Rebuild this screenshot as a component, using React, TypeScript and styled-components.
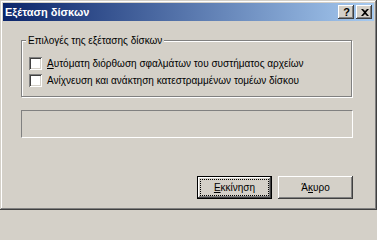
import React from "react";
import styled, { createGlobalStyle } from "styled-components";

const FACE = "#d4d0c8";

const GlobalStyle = createGlobalStyle`
  html, body {
    margin: 0;
    padding: 0;
    background: ${FACE};
  }
  body {
    font-family: "Liberation Sans", Arial, sans-serif;
    font-size: 10px;
    color: #000;
  }
`;

const raised = `
  box-shadow: inset -1px -1px #404040, inset 1px 1px #ffffff,
    inset -2px -2px #808080, inset 2px 2px ${FACE};
`;

const Window = styled.div`
  box-sizing: border-box;
  width: 377px;
  height: 210px;
  padding: 3px;
  display: flex;
  flex-direction: column;
  background: ${FACE};
  box-shadow: inset -1px -1px #404040, inset 1px 1px ${FACE},
    inset -2px -2px #808080, inset 2px 2px #ffffff;
`;

const TitleBar = styled.div`
  height: 18px;
  display: flex;
  align-items: center;
  padding: 0 2px;
  background: linear-gradient(to right, #0a246a, #a6caf0);
`;

const Caption = styled.span`
  flex: 1;
  color: #fff;
  font-weight: bold;
  font-size: 11px;
  line-height: 18px;
`;

const CaptionButtons = styled.div`
  display: flex;
  gap: 2px;
`;

const CaptionButton = styled.div`
  box-sizing: border-box;
  width: 16px;
  height: 14px;
  display: flex;
  align-items: center;
  justify-content: center;
  background: ${FACE};
  font-weight: bold;
  font-size: 11px;
  line-height: 14px;
  padding-left: 1px;
  ${raised}
`;

const Client = styled.div`
  flex: 1;
  display: flex;
  flex-direction: column;
  padding: 0 0 0 18px;
`;

const GroupBox = styled.fieldset`
  box-sizing: border-box;
  width: 331px;
  margin: 13px 0 0;
  padding: 10px 0 9px 0;
  border: 1px solid #808080;
  box-shadow: 1px 1px 0 #ffffff, inset 1px 1px 0 #ffffff;
  display: flex;
  flex-direction: column;
  gap: 4px;
`;

const GroupTitle = styled.legend`
  margin-left: 4px;
  padding: 0 2px;
  line-height: 13px;
  background: ${FACE};
`;

const CheckRow = styled.label`
  display: flex;
  align-items: center;
  gap: 5px;
  height: 13px;
  line-height: 13px;
  margin-left: 7px;
`;

const CheckBox = styled.span`
  box-sizing: border-box;
  width: 13px;
  height: 13px;
  flex: none;
  background: #fff;
  box-shadow: inset 1px 1px #808080, inset -1px -1px #ffffff,
    inset 2px 2px #404040, inset -2px -2px ${FACE};
`;

const Progress = styled.div`
  box-sizing: border-box;
  width: 332px;
  height: 28px;
  margin-top: 13px;
  border: 1px solid;
  border-color: #808080 #ffffff #ffffff #808080;
`;

const ButtonRow = styled.div`
  width: 332px;
  display: flex;
  justify-content: flex-end;
  gap: 6px;
  margin-top: 38px;
`;

const PushButton = styled.div<{ $default?: boolean }>`
  box-sizing: border-box;
  width: 75px;
  height: 23px;
  display: flex;
  padding: ${(p) => (p.$default ? "2px" : "3px")};
  background: ${FACE};
  border: ${(p) => (p.$default ? "1px solid #000" : "none")};
  ${raised}
`;

const ButtonFace = styled.span<{ $focused?: boolean }>`
  flex: 1;
  display: flex;
  align-items: center;
  justify-content: center;
  border: 1px ${(p) => (p.$focused ? "dotted #000" : "solid transparent")};
  line-height: 13px;
`;

const CloseGlyph = () => (
  <svg width="8" height="7" viewBox="0 0 8 7">
    <path d="M0 0h2l2 2 2-2h2L5 3.5 8 7H6L4 5 2 7H0l3-3.5z" fill="#000" />
  </svg>
);

export default function App() {
  return (
    <>
      <GlobalStyle />
      <Window>
        <TitleBar>
          <Caption>Εξέταση δίσκων</Caption>
          <CaptionButtons>
            <CaptionButton>?</CaptionButton>
            <CaptionButton>
              <CloseGlyph />
            </CaptionButton>
          </CaptionButtons>
        </TitleBar>
        <Client>
          <GroupBox>
            <GroupTitle>Επιλογές της εξέτασης δίσκων</GroupTitle>
            <CheckRow>
              <CheckBox />
              <span>
                <u>Α</u>υτόματη διόρθωση σφαλμάτων του συστήματος αρχείων
              </span>
            </CheckRow>
            <CheckRow>
              <CheckBox />
              <span>
                Ανί<u>χ</u>νευση και ανάκτηση κατεστραμμένων τομέων δίσκου
              </span>
            </CheckRow>
          </GroupBox>
          <Progress />
          <ButtonRow>
            <PushButton $default>
              <ButtonFace $focused>
                <span>
                  <u>Ε</u>κκίνηση
                </span>
              </ButtonFace>
            </PushButton>
            <PushButton>
              <ButtonFace>
                <span>
                  Ά<u>κ</u>υρο
                </span>
              </ButtonFace>
            </PushButton>
          </ButtonRow>
        </Client>
      </Window>
    </>
  );
}
